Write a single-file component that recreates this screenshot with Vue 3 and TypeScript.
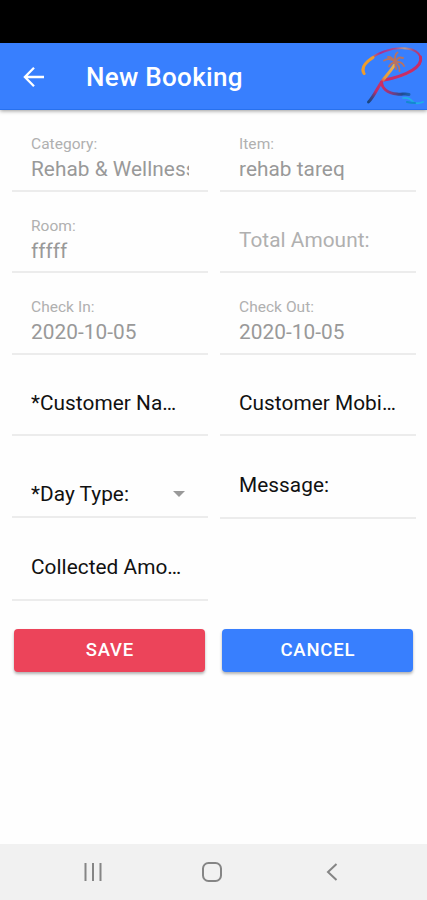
<script setup lang="ts">
interface Field {
  label: string
  value?: string
  disabled?: boolean
  select?: boolean
  size?: string
}

const columns: Field[][] = [
  [
    { label: 'Category:', value: 'Rehab & Wellness', disabled: true },
    { label: 'Room:', value: 'fffff', disabled: true },
    { label: 'Check In:', value: '2020-10-05', disabled: true },
    { label: '*Customer Name:' },
    { label: '*Day Type:', select: true },
    { label: 'Collected Amount:', size: 'tall' },
  ],
  [
    { label: 'Item:', value: 'rehab tareq', disabled: true },
    { label: 'Total Amount:', disabled: true },
    { label: 'Check Out:', value: '2020-10-05', disabled: true },
    { label: 'Customer Mobile:' },
    { label: 'Message:', size: 'tall' },
  ],
]
</script>

<template>
  <div class="screen">
    <div class="status"></div>
    <header class="toolbar">
      <svg class="back" width="22" height="22" viewBox="0 0 22 22" fill="none" stroke="#fff" stroke-width="2.3">
        <path d="M21 11H2.2M11 1.8L1.9 11L11 20.2" />
      </svg>
      <h1>New Booking</h1>
      <svg class="logo" width="67" height="62" viewBox="0 0 67 62" fill="none" stroke-linecap="round" stroke-linejoin="round">
        <defs>
          <linearGradient id="sweep" x1="0" y1="0" x2="1" y2="0">
            <stop offset="0" stop-color="#f5a52a" />
            <stop offset=".12" stop-color="#d98545" />
            <stop offset=".3" stop-color="#a82d90" />
            <stop offset=".55" stop-color="#b04a90" />
            <stop offset=".72" stop-color="#b99a8c" />
            <stop offset=".88" stop-color="#a0488b" />
            <stop offset="1" stop-color="#c72d68" />
          </linearGradient>
          <linearGradient id="stem" gradientUnits="userSpaceOnUse" x1="9" y1="56" x2="35" y2="20">
            <stop offset="0" stop-color="#164681" />
            <stop offset=".16" stop-color="#4b4182" />
            <stop offset=".3" stop-color="#c32b68" />
            <stop offset=".52" stop-color="#c7346b" />
            <stop offset=".66" stop-color="#e79a3c" />
            <stop offset="1" stop-color="#e8b04b" />
          </linearGradient>
          <linearGradient id="leg" x1="0" y1="0" x2="1" y2="0">
            <stop offset="0" stop-color="#cf2d62" />
            <stop offset=".35" stop-color="#853a82" />
            <stop offset=".75" stop-color="#204b91" />
            <stop offset="1" stop-color="#1d62b0" />
          </linearGradient>
        </defs>
        <path d="M5.500 28C1 21 10 11 25 5.500C40 0 58 1 61.500 11C65 22 46 31 25 34" stroke="url(#sweep)" stroke-width="1.900" />
        <path d="M5 27.500C1.500 22 7 16 14 11.500" stroke="#ee9c2e" stroke-width="3" />
        <path d="M61.500 11C64 20 49 29.500 25 34" stroke="#c82d67" stroke-width="3" />
        <path d="M9.500 56C14 52 18 43 22.500 36C26 31 31 26 35.500 19" stroke="url(#stem)" stroke-width="3" />
        <path d="M22.500 36C23 42 28 47 38 48C43 49 46 47 50 48.500" stroke="url(#leg)" stroke-width="3" />
        <path d="M44 52Q50 51 53 55T64 56" stroke="#20b1e5" stroke-width="1.700" />
        <path d="M48 56Q52 57 56 57" stroke="#1389cf" stroke-width="2.200" />
        <path d="M36.500 16Q31 11 25 14.500M36.500 16Q32 10 29 11M36.500 16Q35 9 38.500 6.500M36.500 16Q39 10 44 12M36.500 16Q43 15 45 20M36.500 16Q32 17 30 20.500M36.500 16Q41 20 40.500 25M36.500 16Q36 20 37 23" stroke="#b87362" stroke-width="1.900" />
      </svg>
    </header>

    <main>
      <div class="form">
        <div v-for="(column, index) in columns" :key="index" class="column">
          <div
            v-for="field in column"
            :key="field.label"
            class="field"
            :class="[field.size, { disabled: field.disabled, filled: field.value, select: field.select }]"
          >
            <span class="label">{{ field.label }}</span>
            <span v-if="field.value" class="value">{{ field.value }}</span>
            <i v-if="field.select" class="caret"></i>
          </div>
        </div>
      </div>
      <div class="actions">
        <button class="save" type="button">SAVE</button>
        <button class="cancel" type="button">CANCEL</button>
      </div>
    </main>

    <nav>
      <svg width="18" height="18" viewBox="0 0 18 18" stroke="#858585" stroke-width="2">
        <path d="M1.500 0V18M9 0V18M16.500 0V18" />
      </svg>
      <svg width="20" height="20" viewBox="0 0 20 20" fill="none" stroke="#858585" stroke-width="2">
        <rect x="1" y="1" width="18" height="18" rx="5.500" />
      </svg>
      <svg width="12" height="18" viewBox="0 0 12 18" fill="none" stroke="#858585" stroke-width="2">
        <path d="M10.500 1L2 9L10.500 17" />
      </svg>
    </nav>
  </div>
</template>

<style>
body {
  background: #fefefe;
}
</style>

<style scoped>
.screen {
  display: flex;
  flex-direction: column;
  height: 900px;
  overflow: hidden;
  font-family: Roboto, sans-serif;
  color: #111;
}

.status {
  height: 43px;
  background: #000;
}

.toolbar {
  display: flex;
  align-items: center;
  box-sizing: border-box;
  height: 67px;
  padding: 1px 1px 0 23px;
  background: #387ffe;
  border-bottom: 1px solid #2871ee;
  box-shadow: 0 1px 4px rgba(0, 0, 0, 0.4);
}

.back {
  flex: none;
}

h1 {
  flex: 1;
  margin: 1px 0 0 41px;
  color: #fff;
  font-size: 26px;
  font-weight: 500;
  line-height: 30px;
  letter-spacing: 0.3px;
  white-space: nowrap;
}

.logo {
  flex: none;
}

main {
  flex: 1;
}

.form {
  display: grid;
  grid-template-columns: 196px 196px;
  column-gap: 12px;
  padding: 0 11px 0 12px;
}

.field {
  display: flex;
  align-items: center;
  box-sizing: border-box;
  height: 81.6px;
  padding: 17px 18px 0 19px;
  border-bottom: 2px solid #ececec;
  font-size: 20.8px;
  line-height: 26px;
}

.field.tall {
  height: 83px;
}

.label,
.value {
  overflow: hidden;
  white-space: nowrap;
  letter-spacing: 0.04px;
}

.label {
  text-overflow: ellipsis;
}

.disabled {
  color: #b0b0b0;
}

.filled {
  flex-direction: column;
  align-items: flex-start;
  justify-content: flex-start;
  padding-top: 25px;
}

.filled .label {
  font-size: 15.5px;
  line-height: 19px;
}

.value {
  width: 158px;
  margin-top: 2px;
  color: #999;
}

.select {
  justify-content: space-between;
  padding: 35px 23px 0 19px;
}

.caret {
  border-top: 6px solid #999;
  border-left: 6px solid transparent;
  border-right: 6px solid transparent;
}

.actions {
  display: grid;
  grid-template-columns: 191px 191px;
  column-gap: 17px;
  padding: 28px 14px 0 14.4px;
}

button {
  height: 43px;
  padding: 0;
  border: 0;
  border-radius: 4px;
  color: #fff;
  font-family: inherit;
  font-size: 18.5px;
  font-weight: 500;
  letter-spacing: 0.8px;
  box-shadow: 0 2px 3px rgba(0, 0, 0, 0.3);
}

.save {
  background: #ec445a;
}

.cancel {
  background: #387ffe;
}

nav {
  display: grid;
  grid-template-columns: 118px 20px 116px;
  align-items: center;
  box-sizing: border-box;
  height: 56px;
  padding-left: 84px;
  background: #f1f1f1;
}

nav svg:last-child {
  justify-self: end;
}
</style>
